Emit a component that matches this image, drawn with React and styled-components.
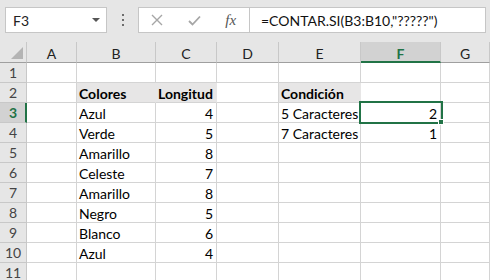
import React from "react";
import styled, { createGlobalStyle } from "styled-components";

const Global = createGlobalStyle`
  html, body { margin: 0; padding: 0; background: #ffffff; }
  body { font-family: Lato, "Open Sans", sans-serif; overflow: hidden; }
`;

const GREEN = "#217346";

const Page = styled.div`
  width: 490px;
  height: 280px;
  overflow: hidden;
  background: #fff;
`;

const Toolbar = styled.div`
  height: 42px;
  background: #e6e6e6;
  display: flex;
  align-items: flex-start;
  padding-top: 7px;
  box-sizing: border-box;
`;

const NameBox = styled.div`
  margin-left: 5px;
  width: 102px;
  height: 26px;
  box-sizing: border-box;
  background: #fff;
  border: 1px solid #c6c6c6;
  display: flex;
  align-items: center;
  justify-content: space-between;
  padding: 0 6px 0 7px;
  font-size: 14px;
  color: #222;
`;

const Caret = styled.span`
  width: 0;
  height: 0;
  border-left: 4px solid transparent;
  border-right: 4px solid transparent;
  border-top: 4px solid #555;
`;

const Dots = styled.div`
  width: 31px;
  height: 26px;
  display: flex;
  flex-direction: column;
  align-items: center;
  justify-content: center;
  gap: 3px;
  & > i {
    display: block;
    width: 2px;
    height: 2px;
    background: #6d6d6d;
  }
`;

const ButtonsBox = styled.div`
  width: 111px;
  height: 26px;
  box-sizing: border-box;
  background: #fff;
  border: 1px solid #c6c6c6;
  border-right: none;
  display: flex;
  align-items: center;
`;

const ToolBtn = styled.div`
  width: 37px;
  height: 24px;
  display: flex;
  align-items: center;
  justify-content: center;
  color: #a6a6a6;
`;

const Fx = styled.span`
  font-family: "Liberation Serif", serif;
  font-style: italic;
  font-size: 15px;
  color: #555;
`;

const FormulaInput = styled.div`
  flex: 1;
  margin-right: 4px;
  height: 26px;
  box-sizing: border-box;
  background: #fff;
  border: 1px solid #c6c6c6;
  display: flex;
  align-items: center;
  padding-left: 11px;
  font-size: 14px;
  color: #111;
`;

const Sheet = styled.div`
  position: relative;
  display: grid;
  grid-template-columns: 27px 50px 79px 61px 62px 82px 80px 1fr;
  grid-template-rows: 21px repeat(11, 20px);
  background: #e6e6e6;
`;

const Corner = styled.div`
  position: relative;
  background: #e6e6e6;
  border-right: 1px solid #c8c8c8;
  border-bottom: 1px solid #9f9f9f;
  box-sizing: border-box;
  &::after {
    content: "";
    position: absolute;
    right: 3px;
    bottom: 3px;
    width: 0;
    height: 0;
    border-left: 12px solid transparent;
    border-bottom: 12px solid #b4b4b4;
  }
`;

const ColHead = styled.div`
  box-sizing: border-box;
  background: ${(p) => (p.$active ? "#d2d2d2" : "#e6e6e6")};
  color: ${(p) => (p.$active ? GREEN : "#222")};
  border-right: 1px solid #c8c8c8;
  border-bottom: ${(p) => (p.$active ? `2px solid ${GREEN}` : "1px solid #9f9f9f")};
  display: flex;
  align-items: center;
  justify-content: center;
  font-size: 14px;
  padding-top: ${(p) => (p.$active ? "3px" : "2px")};
  font-weight: ${(p) => (p.$active ? 700 : 400)};
`;

const RowHead = styled.div`
  box-sizing: border-box;
  background: ${(p) => (p.$active ? "#d2d2d2" : "#e6e6e6")};
  color: ${(p) => (p.$active ? GREEN : "#444")};
  border-right: ${(p) => (p.$active ? `2px solid ${GREEN}` : "1px solid #c8c8c8")};
  border-bottom: 1px solid #c8c8c8;
  display: flex;
  align-items: center;
  justify-content: center;
  padding-left: ${(p) => (p.$active ? "1px" : "0")};
  font-size: 14px;
  font-weight: ${(p) => (p.$active ? 700 : 400)};
`;

const Cell = styled.div`
  box-sizing: border-box;
  background: ${(p) => (p.$fill ? "#e7e6e6" : "#ffffff")};
  border-right: 1px solid ${(p) => (p.$fill ? "#e7e6e6" : "#d4d4d4")};
  border-bottom: 1px solid #d4d4d4;
  display: flex;
  align-items: center;
  justify-content: ${(p) => (p.$num ? "flex-end" : "flex-start")};
  padding: 1px 3px 0 2px;
  font-size: 14px;
  font-weight: ${(p) => (p.$bold ? 700 : 400)};
  color: #000;
  white-space: nowrap;
  overflow: visible;
`;

const Selection = styled.div`
  position: absolute;
  left: 359px;
  top: 59px;
  width: 84px;
  height: 23px;
  box-sizing: border-box;
  border: 2px solid ${GREEN};
  pointer-events: none;
`;

const Handle = styled.div`
  position: absolute;
  left: 438px;
  top: 77px;
  width: 6px;
  height: 6px;
  box-sizing: border-box;
  background: ${GREEN};
  border: 1px solid #fff;
`;

const cols = ["A", "B", "C", "D", "E", "F", "G"];

const data = {
  2: { B: ["Colores", "b", "f"], C: ["Longitud", "b", "f"], E: ["Condición", "b", "f"] },
  3: { B: ["Azul"], C: ["4", "n"], E: ["5 Caracteres"], F: ["2", "n"] },
  4: { B: ["Verde"], C: ["5", "n"], E: ["7 Caracteres"], F: ["1", "n"] },
  5: { B: ["Amarillo"], C: ["8", "n"] },
  6: { B: ["Celeste"], C: ["7", "n"] },
  7: { B: ["Amarillo"], C: ["8", "n"] },
  8: { B: ["Negro"], C: ["5", "n"] },
  9: { B: ["Blanco"], C: ["6", "n"] },
  10: { B: ["Azul"], C: ["4", "n"] },
};

export default function App() {
  const rows = Array.from({ length: 11 }, (_, i) => i + 1);
  return (
    <Page>
      <Global />
      <Toolbar>
        <NameBox>
          <span>F3</span>
          <Caret />
        </NameBox>
        <Dots>
          <i />
          <i />
          <i />
        </Dots>
        <ButtonsBox>
          <ToolBtn>
            <svg width="12" height="12" viewBox="0 0 12 12">
              <path d="M1 1 L11 11 M11 1 L1 11" stroke="#a6a6a6" strokeWidth="1.4" fill="none" />
            </svg>
          </ToolBtn>
          <ToolBtn>
            <svg width="13" height="11" viewBox="0 0 13 11">
              <path d="M1 6 L4.5 9.5 L12 1.5" stroke="#a6a6a6" strokeWidth="1.8" fill="none" />
            </svg>
          </ToolBtn>
          <ToolBtn>
            <Fx>fx</Fx>
          </ToolBtn>
        </ButtonsBox>
        <FormulaInput>=CONTAR.SI(B3:B10,"?????")</FormulaInput>
      </Toolbar>
      <Sheet>
        <Corner />
        {cols.map((c) => (
          <ColHead key={c} $active={c === "F"}>
            {c}
          </ColHead>
        ))}
        {rows.map((r) => (
          <React.Fragment key={r}>
            <RowHead $active={r === 3}>{r}</RowHead>
            {cols.map((c) => {
              const v = data[r] && data[r][c];
              return (
                <Cell
                  key={c}
                  $bold={v && v.includes("b")}
                  $fill={v && v.includes("f")}
                  $num={v && v.includes("n")}
                >
                  {v ? v[0] : ""}
                </Cell>
              );
            })}
          </React.Fragment>
        ))}
        <Selection />
        <Handle />
      </Sheet>
    </Page>
  );
}
